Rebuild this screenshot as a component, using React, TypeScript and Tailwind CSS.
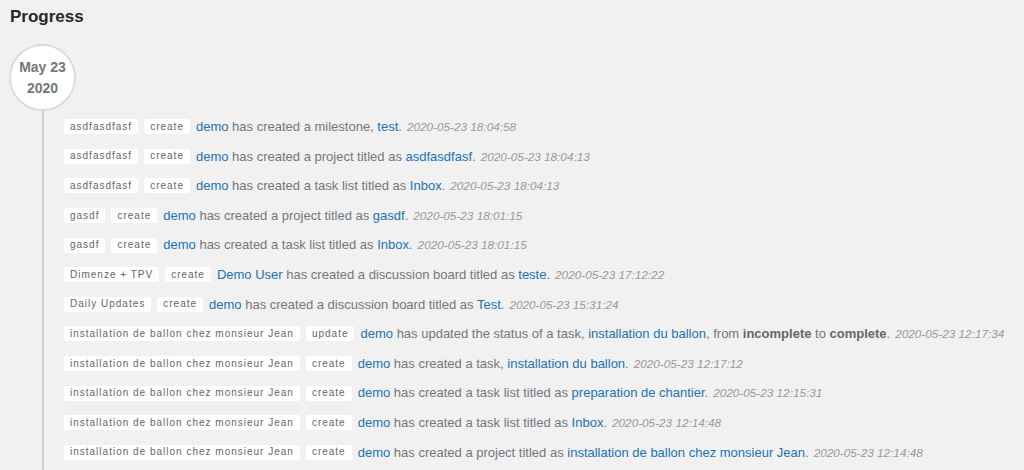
import React from 'react';

type Part = { t: string; kind?: 'link' | 'bold' };

type Activity = {
  project: string;
  action: string;
  parts: Part[];
  time: string;
};

const L = (t: string): Part => ({ t, kind: 'link' });
const B = (t: string): Part => ({ t, kind: 'bold' });
const T = (t: string): Part => ({ t });

const activities: Activity[] = [
  { project: 'asdfasdfasf', action: 'create', parts: [L('demo'), T(' has created a milestone, '), L('test'), T('.')], time: '2020-05-23 18:04:58' },
  { project: 'asdfasdfasf', action: 'create', parts: [L('demo'), T(' has created a project titled as '), L('asdfasdfasf'), T('.')], time: '2020-05-23 18:04:13' },
  { project: 'asdfasdfasf', action: 'create', parts: [L('demo'), T(' has created a task list titled as '), L('Inbox'), T('.')], time: '2020-05-23 18:04:13' },
  { project: 'gasdf', action: 'create', parts: [L('demo'), T(' has created a project titled as '), L('gasdf'), T('.')], time: '2020-05-23 18:01:15' },
  { project: 'gasdf', action: 'create', parts: [L('demo'), T(' has created a task list titled as '), L('Inbox'), T('.')], time: '2020-05-23 18:01:15' },
  { project: 'Dimenze + TPV', action: 'create', parts: [L('Demo User'), T(' has created a discussion board titled as '), L('teste'), T('.')], time: '2020-05-23 17:12:22' },
  { project: 'Daily Updates', action: 'create', parts: [L('demo'), T(' has created a discussion board titled as '), L('Test'), T('.')], time: '2020-05-23 15:31:24' },
  { project: 'installation de ballon chez monsieur Jean', action: 'update', parts: [L('demo'), T(' has updated the status of a task, '), L('installation du ballon'), T(', from '), B('incomplete'), T(' to '), B('complete'), T('.')], time: '2020-05-23 12:17:34' },
  { project: 'installation de ballon chez monsieur Jean', action: 'create', parts: [L('demo'), T(' has created a task, '), L('installation du ballon'), T('.')], time: '2020-05-23 12:17:12' },
  { project: 'installation de ballon chez monsieur Jean', action: 'create', parts: [L('demo'), T(' has created a task list titled as '), L('preparation de chantier'), T('.')], time: '2020-05-23 12:15:31' },
  { project: 'installation de ballon chez monsieur Jean', action: 'create', parts: [L('demo'), T(' has created a task list titled as '), L('Inbox'), T('.')], time: '2020-05-23 12:14:48' },
  { project: 'installation de ballon chez monsieur Jean', action: 'create', parts: [L('demo'), T(' has created a project titled as '), L('installation de ballon chez monsieur Jean'), T('.')], time: '2020-05-23 12:14:48' },
];

const Tag = ({ children, className = '' }: { children: React.ReactNode; className?: string }) => (
  <span className={`flex items-center h-[15px] px-[6px] bg-white text-[10px] tracking-[1px] text-[#666] rounded-[2px] leading-none ${className}`}>
    {children}
  </span>
);

export default function App() {
  return (
    <div className="h-[470px] overflow-hidden bg-[#f1f1f1] font-['Liberation_Sans',Arial,sans-serif]">
      <h1 className="pl-[10px] pt-[8px] text-[17px] font-bold text-[#23282d] leading-[18px]">Progress</h1>

      <div className="pl-[9px] pt-[18px]">
        {/* Date bubble */}
        <div className="w-[67px] h-[67px] rounded-full bg-white border-2 border-[#dcdcdc] flex flex-col items-center justify-center text-[14px] font-bold text-[#72777c] leading-[21px] pt-[1px]">
          <span>May 23</span>
          <span>2020</span>
        </div>

        {/* Timeline line + activities */}
        <div className="flex">
          <div className="ml-[33px] w-[2px] bg-[#cfcfcf] shrink-0" />
          <ul className="ml-[20px] pt-[1px] pb-[40px] flex flex-col">
            {activities.map((a, i) => (
              <li key={i} className="flex items-center h-[29.6px] whitespace-nowrap">
                <Tag>{a.project}</Tag>
                <Tag className="ml-[6px]">{a.action}</Tag>
                <span className="ml-[6px] text-[13px] text-[#72777c]">
                  {a.parts.map((p, j) =>
                    p.kind === 'link' ? (
                      <a key={j} className="text-[#2271b1]">{p.t}</a>
                    ) : p.kind === 'bold' ? (
                      <strong key={j} className="font-bold text-[#666]">{p.t}</strong>
                    ) : (
                      <span key={j}>{p.t}</span>
                    )
                  )}
                </span>
                <span className="ml-[5px] text-[11.75px] italic text-[#999]">{a.time}</span>
              </li>
            ))}
          </ul>
        </div>
      </div>
    </div>
  );
}
